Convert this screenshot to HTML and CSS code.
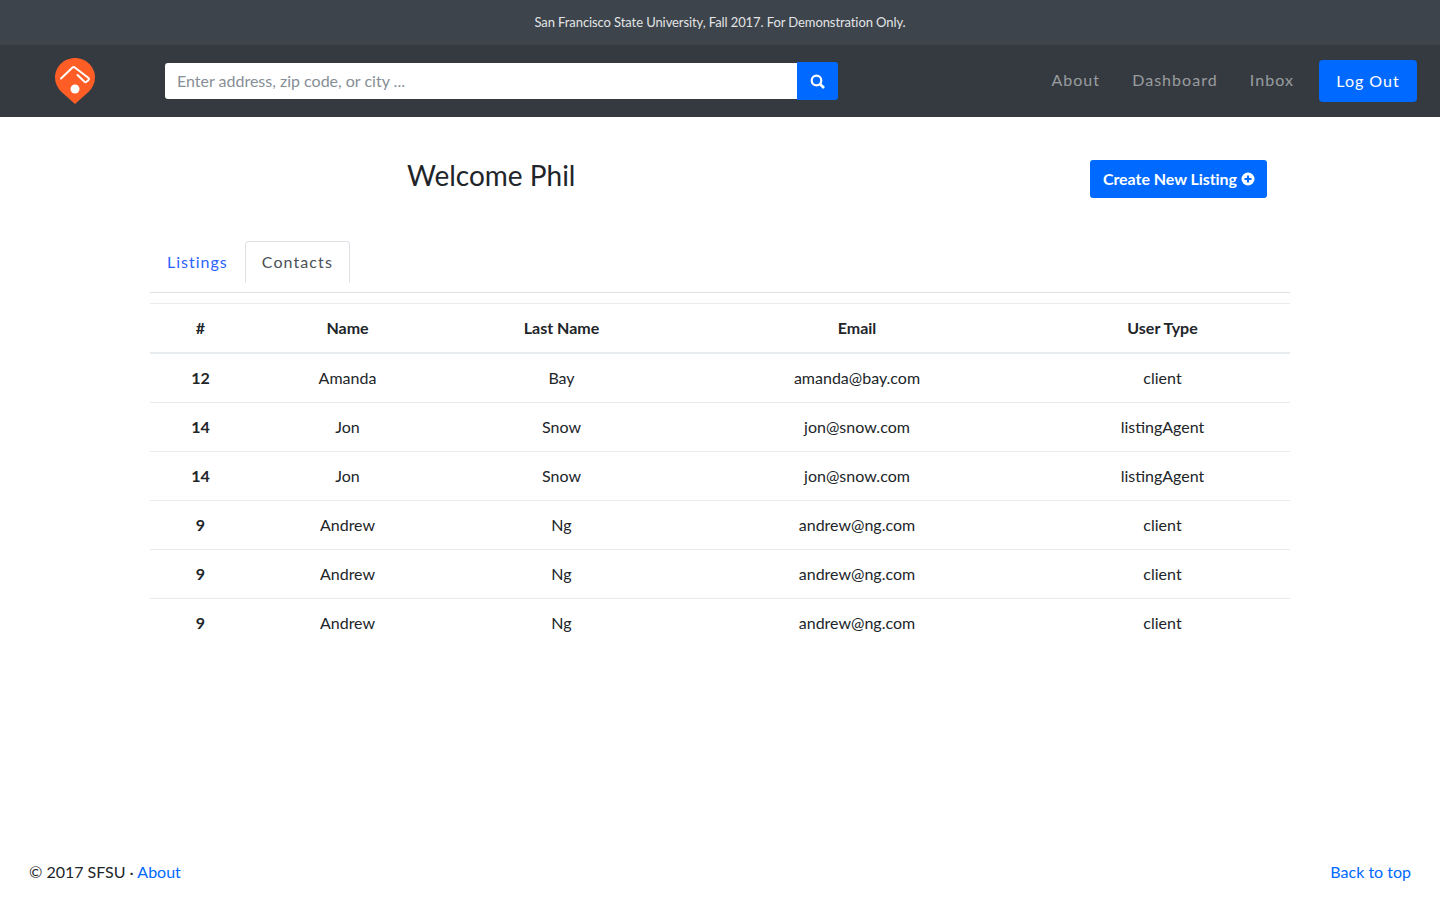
FILE: index.html
```html
<!DOCTYPE html>
<html lang="en">
<head>
  <meta charset="UTF-8">
  <meta name="viewport" content="width=device-width, initial-scale=1.0">
  <title>Dashboard</title>
  <link rel="stylesheet" href="styles.css">
</head>
<body>

<div class="banner">San Francisco State University, Fall 2017. For Demonstration Only.</div>

<nav class="navbar">
  <a class="logo" href="#">
    <svg width="40" height="46" viewBox="0 0 40 46">
      <path d="M20 0C9 0 0 8.800 0 19.500C0 25 2.400 29.500 6 33.500L20 46L34 33.500C37.600 29.500 40 25 40 19.500C40 8.800 31 0 20 0Z" fill="#ff5d26"/>
      <path d="M6 20.500L17.500 9.500Q18.500 8.700 19.800 9.500L33.500 20Q34.500 21 33.500 22L31.500 23.800Q30.500 24.500 29.500 23.800L22.500 17" fill="none" stroke="#fff" stroke-width="2" stroke-linecap="round"/>
      <circle cx="20" cy="31" r="4.500" fill="#fff"/>
    </svg>
  </a>
  <form class="search">
    <input class="search-input" type="text" placeholder="Enter address, zip code, or city ...">
    <button class="search-btn" type="button" aria-label="Search">
      <svg width="15" height="15" viewBox="0 0 15 15">
        <circle cx="6.500" cy="6.500" r="4.800" fill="none" stroke="#fff" stroke-width="2.200"/>
        <path d="M10 10L14 14" stroke="#fff" stroke-width="2.600"/>
      </svg>
    </button>
  </form>
  <div class="nav-links">
    <a class="nav-link" href="#">About</a>
    <a class="nav-link" href="#">Dashboard</a>
    <a class="nav-link" href="#">Inbox</a>
    <a class="logout" href="#">Log Out</a>
  </div>
</nav>

<main class="container">
  <div class="page-head">
    <h1 class="welcome">Welcome Phil</h1>
    <a class="create-btn" href="#">Create New Listing
      <svg width="14" height="14" viewBox="0 0 14 14">
        <circle cx="7" cy="7" r="6.500" fill="#fff"/>
        <path d="M7 3.500V10.500M3.500 7H10.500" stroke="#0069ff" stroke-width="2.200"/>
      </svg>
    </a>
  </div>

  <ul class="tabs">
    <li><a class="tab" href="#">Listings</a></li>
    <li><a class="tab active" href="#">Contacts</a></li>
  </ul>

  <table class="contacts">
    <colgroup>
      <col class="col-id">
      <col class="col-name">
      <col class="col-last">
      <col class="col-email">
      <col class="col-type">
    </colgroup>
    <thead>
      <tr><th>#</th><th>Name</th><th>Last Name</th><th>Email</th><th>User Type</th></tr>
    </thead>
    <tbody>
      <tr><th>12</th><td>Amanda</td><td>Bay</td><td>amanda@bay.com</td><td>client</td></tr>
      <tr><th>14</th><td>Jon</td><td>Snow</td><td>jon@snow.com</td><td>listingAgent</td></tr>
      <tr><th>14</th><td>Jon</td><td>Snow</td><td>jon@snow.com</td><td>listingAgent</td></tr>
      <tr><th>9</th><td>Andrew</td><td>Ng</td><td>andrew@ng.com</td><td>client</td></tr>
      <tr><th>9</th><td>Andrew</td><td>Ng</td><td>andrew@ng.com</td><td>client</td></tr>
      <tr><th>9</th><td>Andrew</td><td>Ng</td><td>andrew@ng.com</td><td>client</td></tr>
    </tbody>
  </table>
</main>

<footer class="footer">
  <span>&copy; 2017 SFSU &middot; <a href="#">About</a></span>
  <a href="#">Back to top</a>
</footer>

</body>
</html>
```

FILE: styles.css
```css
* {
  box-sizing: border-box;
}

html, body {
  height: 100%;
}

body {
  font-family: Lato, "Open Sans", sans-serif;
  font-size: 16px;
  line-height: 1.5;
  color: #212529;
  background-color: #fff;
  margin: 0;
  display: flex;
  flex-direction: column;
  min-height: 900px;
}

a {
  color: #0069ff;
  text-decoration: none;
}

.banner {
  height: 45px;
  background-color: #3d444c;
  color: #e3e4e6;
  font-size: 13px;
  letter-spacing: -0.09px;
  line-height: 44px;
  text-align: center;
}

.navbar {
  height: 72px;
  background-color: #343a40;
  display: flex;
  align-items: center;
  padding: 0 23px 0 55px;
}

.logo {
  display: flex;
  width: 40px;
  height: 46px;
}

.search {
  display: flex;
  align-items: center;
  margin-left: 70px;
}

.search-input {
  width: 632px;
  height: 36px;
  padding: 0 12px 2px;
  border: 0;
  border-radius: 3px 0 0 3px;
  font: 16px Lato, sans-serif;
  color: #495057;
  background-color: #fff;
}

.search-input::placeholder {
  color: #868e96;
  opacity: 1;
}

.search-btn {
  width: 41px;
  height: 38px;
  padding: 0;
  border: 0;
  border-radius: 0 3px 3px 0;
  background-color: #0069ff;
  display: flex;
  align-items: center;
  justify-content: center;
}

.nav-links {
  margin-left: auto;
  display: flex;
  align-items: center;
}

.nav-link {
  color: rgba(255, 255, 255, 0.5);
  letter-spacing: 1.05px;
  margin-right: 32px;
  position: relative;
  top: -1px;
}

.nav-links .nav-link:nth-child(3) {
  margin-right: 25px;
}

.logout {
  width: 98px;
  height: 42px;
  background-color: #0069ff;
  color: #fff;
  border-radius: 4px;
  letter-spacing: 1px;
  line-height: 42px;
  text-align: center;
}

.container {
  width: 1140px;
  margin: 0 auto;
  flex: 1;
}

.page-head {
  display: flex;
  justify-content: space-between;
  align-items: flex-start;
  padding: 43px 23px 0 257px;
  height: 124px;
}

.welcome {
  margin: 0;
  font-size: 28px;
  font-weight: 400;
  line-height: 30px;
  color: #212529;
}

.create-btn {
  height: 38px;
  padding: 0 12px 0 13px;
  margin-left: auto;
  background-color: #0069ff;
  color: #fff;
  border-radius: 3px;
  font-weight: 700;
  letter-spacing: -0.05px;
  line-height: 38px;
  display: flex;
  align-items: center;
  gap: 4px;
}

.tabs {
  list-style: none;
  margin: 0 0 10px;
  padding: 0;
  height: 52px;
  display: flex;
  border-bottom: 1px solid #dee2e6;
}

.tab {
  display: block;
  height: 42px;
  padding: 8px 16px 0;
  border: 1px solid transparent;
  border-bottom: 0;
  border-radius: 4px 4px 0 0;
  letter-spacing: 1px;
  color: #2a62ff;
}

.tab.active {
  border-color: #dee2e6;
  color: #495057;
  letter-spacing: 1.1px;
}

.contacts {
  width: 100%;
  border-collapse: collapse;
  table-layout: fixed;
  text-align: center;
}

.col-id { width: 101px; }
.col-name { width: 194px; }
.col-last { width: 233px; }
.col-email { width: 358px; }
.col-type { width: 254px; }

.contacts th,
.contacts td {
  height: 49px;
  padding: 0 12px;
  border-top: 1px solid #e9ecef;
  font-size: 16px;
}

.contacts tr > :nth-child(2),
.contacts tr > :nth-child(5) {
  padding-right: 13px;
}

.contacts thead th {
  height: 49px;
  padding-top: 1px;
  border-bottom: 2px solid #e9ecef;
}

.contacts tbody tr:first-child > * {
  height: 50px;
  padding-top: 1px;
}

.footer {
  display: flex;
  justify-content: space-between;
  padding: 0 29px;
  height: 40px;
  color: #212529;
}
```
